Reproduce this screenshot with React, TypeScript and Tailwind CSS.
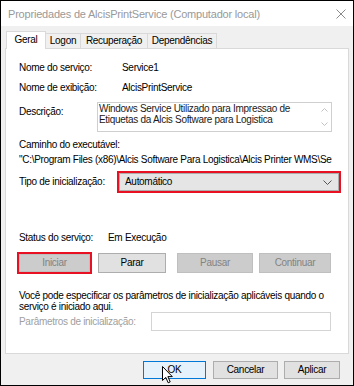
import React from "react";

function Btn({
  label,
  w,
  h = 20,
  disabled = false,
  className = "",
}: {
  label: string;
  w: string;
  h?: number;
  disabled?: boolean;
  className?: string;
}) {
  return (
    <div
      className={`${w} ${h === 20 ? "h-[20px]" : "h-[18px]"} flex items-center justify-center border ${
        disabled ? "bg-[#cccccc] border-[#bfbfbf] text-[#838383]" : "bg-[#e1e1e1] border-[#adadad] text-black"
      } ${className}`}
    >
      {label}
    </div>
  );
}

export default function App() {
  return (
    <div className="relative w-[354px] h-[386px] border border-black bg-[#f0f0f0] font-['Liberation_Sans',Arial,sans-serif] text-[10px] tracking-[-0.3px] leading-[12px] text-black overflow-hidden flex flex-col">
      {/* Title bar */}
      <div className="h-[25px] shrink-0 bg-white flex items-center pl-[7px] pr-[7px]">
        <span className="text-[#999999] text-[11px] tracking-[-0.2px]">
          Propriedades de AlcisPrintService (Computador local)
        </span>
        <svg className="ml-auto" width="10" height="10" viewBox="0 0 10 10">
          <path d="M0.5 0.5 L9.5 9.5 M9.5 0.5 L0.5 9.5" stroke="#8a8a8a" strokeWidth="1" />
        </svg>
      </div>

      <div className="px-[4px] flex flex-col">
        {/* Tabs */}
        <div className="mt-[5px] h-[17px] flex items-end pl-[1px]">
          <div className="relative z-10 -mb-[1px] h-[18px] w-[40px] bg-white border-l border-t border-r border-[#d9d9d9] flex items-center justify-center pb-[1px]">
            Geral
          </div>
          <div className="h-[15px] w-[35px] border-t border-r border-[#d9d9d9] flex items-center justify-center">
            Logon
          </div>
          <div className="h-[15px] w-[67px] border-t border-r border-[#d9d9d9] flex items-center justify-center">
            Recuperação
          </div>
          <div className="h-[15px] w-[69px] border-t border-r border-[#d9d9d9] flex items-center justify-center">
            Dependências
          </div>
        </div>

        {/* Panel */}
        <div className="h-[306px] bg-white border border-[#d9d9d9] flex flex-col">
          <div className="mt-[13px] flex h-[12px] pl-[13px]">
            <div className="w-[103px]">Nome do serviço:</div>
            <div>Service1</div>
          </div>
          <div className="mt-[8px] flex h-[12px] pl-[13px]">
            <div className="w-[103px]">Nome de exibição:</div>
            <div>AlcisPrintService</div>
          </div>
          <div className="mt-[8px] flex pl-[13px]">
            <div className="w-[78px] pt-[4px]">Descrição:</div>
            <div className="w-[235px] h-[30px] border border-[#cfcfcf] flex">
              <div className="flex-1 pl-[1px] pt-[0px] leading-[11px] text-[#1a1a1a]">
                Windows Service Utilizado para Impressao de
                <br />
                Etiquetas da Alcis Software para Logistica
              </div>
              <div className="w-[14px] flex flex-col items-center justify-between py-[5px]">
                <svg width="7" height="4" viewBox="0 0 7 4">
                  <path d="M0.5 3.5 L3.5 0.5 L6.5 3.5" fill="none" stroke="#c2c2c2" />
                </svg>
                <svg width="7" height="4" viewBox="0 0 7 4">
                  <path d="M0.5 0.5 L3.5 3.5 L6.5 0.5" fill="none" stroke="#c2c2c2" />
                </svg>
              </div>
            </div>
          </div>
          <div className="mt-[7px] pl-[13px] h-[12px]">Caminho do executável:</div>
          <div className="mt-[3px] pl-[13px] w-[330px] h-[12px] whitespace-nowrap overflow-hidden">
            "C:\Program Files (x86)\Alcis Software Para Logistica\Alcis Printer WMS\Se
          </div>
          <div className="mt-[5px] flex items-center h-[22px]">
            <div className="pl-[13px] w-[111px]">Tipo de inicialização:</div>
            <div className="w-[224px] h-[22px] border-2 border-[#e81123]">
              <div className="h-full border border-[#adadad] bg-[#e5e5e5] flex items-center pl-[5px] pr-[6px]">
                <span>Automático</span>
                <svg className="ml-auto" width="9" height="5" viewBox="0 0 9 5">
                  <path d="M0.5 0.5 L4.5 4.5 L8.5 0.5" fill="none" stroke="#555" />
                </svg>
              </div>
            </div>
          </div>

          <div className="mt-[39px] flex pl-[13px] h-[12px]">
            <div className="w-[89px]">Status do serviço:</div>
            <div>Em Execução</div>
          </div>

          <div className="mt-[8px] flex items-center h-[22px] pl-[11px]">
            <div className="w-[75px] h-[22px] border-2 border-[#e81123]">
              <div className="h-full bg-[#cccccc] border border-[#bfbfbf] text-[#838383] flex items-center justify-center">
                Iniciar
              </div>
            </div>
            <Btn label="Parar" w="w-[68px]" className="ml-[6px]" />
            <Btn label="Pausar" w="w-[76px]" disabled className="ml-[11px]" />
            <Btn label="Continuar" w="w-[72px]" disabled className="ml-[6px]" />
          </div>

          <div className="mt-[16px] pl-[13px] leading-[11px]">
            Você pode especificar os parâmetros de inicialização aplicáveis quando o
            <br />
            serviço é iniciado aqui.
          </div>

          <div className="flex items-center h-[19px]">
            <div className="pl-[13px] w-[145px] text-[#a0a0a0]">Parâmetros de inicialização:</div>
            <div className="w-[180px] h-[19px] border border-[#d4d4d4] bg-white" />
          </div>
        </div>

        {/* Bottom buttons */}
        <div className="mt-[7px] flex">
          <div className="ml-[138px] w-[63px] h-[18px] bg-[#e5f1fb] border border-[#0078d7] flex items-center justify-center">
            OK
          </div>
          <Btn label="Cancelar" w="w-[65px]" h={18} className="ml-[7px]" />
          <Btn label="Aplicar" w="w-[56px]" h={18} className="ml-[6px]" />
        </div>
      </div>

      {/* Mouse cursor */}
      <svg
        className="absolute left-[161px] top-[365px]"
        width="12"
        height="18"
        viewBox="0 0 12 18"
      >
        <path
          d="M0.5 0.5 L0.5 14.5 L3.8 11.4 L6.2 16.8 L8.2 15.9 L5.9 10.6 L10.3 10.6 Z"
          fill="white"
          stroke="black"
          strokeWidth="1"
          strokeLinejoin="miter"
        />
      </svg>
    </div>
  );
}
